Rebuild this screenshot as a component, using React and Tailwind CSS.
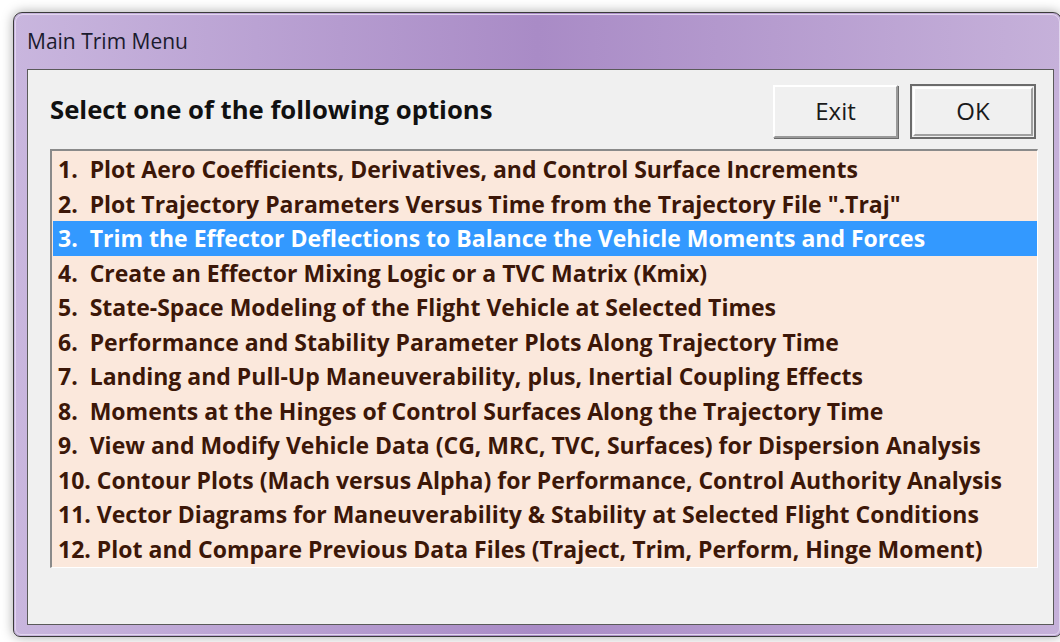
import React from "react";

const options = [
  "1.  Plot Aero Coefficients, Derivatives, and Control Surface Increments",
  "2.  Plot Trajectory Parameters Versus Time from the Trajectory File \".Traj\"",
  "3.  Trim the Effector Deflections to Balance the Vehicle Moments and Forces",
  "4.  Create an Effector Mixing Logic or a TVC Matrix (Kmix)",
  "5.  State-Space Modeling of the Flight Vehicle at Selected Times",
  "6.  Performance and Stability Parameter Plots Along Trajectory Time",
  "7.  Landing and Pull-Up Maneuverability, plus, Inertial Coupling Effects",
  "8.  Moments at the Hinges of Control Surfaces Along the Trajectory Time",
  "9.  View and Modify Vehicle Data (CG, MRC, TVC, Surfaces) for Dispersion Analysis",
  "10. Contour Plots (Mach versus Alpha) for Performance, Control Authority Analysis",
  "11. Vector Diagrams for Maneuverability & Stability at Selected Flight Conditions",
  "12. Plot and Compare Previous Data Files (Traject, Trim, Perform, Hinge Moment)",
];

const uiFont = { fontFamily: '"Open Sans", "Noto Sans", sans-serif' };

function Button({ label, isDefault }) {
  if (isDefault) {
    return (
      <div className="w-[126px] h-[55px] border-2 border-[#6b6b6b] bg-[#f0f0f0] p-[1px]">
        <div className="w-full h-full border-t-2 border-l-2 border-white border-b-2 border-r-2 border-b-[#a0a0a0] border-r-[#a0a0a0] flex items-center justify-center text-[24px] text-[#1a1a1a]" style={uiFont}>
          {label}
        </div>
      </div>
    );
  }
  return (
    <div className="w-[125px] h-[53px] mt-[1px] bg-[#f0f0f0] border-t-2 border-l-2 border-white border-b-2 border-r-2 border-b-[#9a9a9a] border-r-[#9a9a9a] shadow-[1px_1px_0_#6b6b6b] flex items-center justify-center text-[24px] text-[#1a1a1a]" style={uiFont}>
      {label}
    </div>
  );
}

export default function App() {
  return (
    <div className="w-[1060px] h-[642px] bg-white overflow-hidden pl-[13px] pt-[12px]">
      {/* dialog window */}
      <div className="w-[1049px] h-[625px] rounded-t-[9px] rounded-b-[7px] border border-[#3a3a3a] shadow-[0_0_12px_rgba(0,0,0,0.35)] bg-gradient-to-r from-[#c9b6de] via-[#a98bc6] to-[#c6b1da] p-[1px]">
        <div className="w-full h-full rounded-t-[8px] rounded-b-[6px] border border-[#e2d6ee] flex flex-col pl-[11px] pr-[5px] pb-[9px]">
          {/* title bar */}
          <div className="h-[54px] flex items-center text-[21px] text-[#1b1b2e]" style={uiFont}>
            Main Trim Menu
          </div>
          {/* client area */}
          <div className="flex-1 border border-[#5a5a5a] bg-[#f0f0f0] pl-[22px] pr-[13px] pt-[13px]">
            <div className="flex items-center h-[56px]">
              <div className="flex-1 text-[25.7px] font-bold text-[#111] pb-[2px]" style={uiFont}>
                Select one of the following options
              </div>
              <div className="flex gap-[12px] items-start mr-[4px]">
                <Button label="Exit" />
                <Button label="OK" isDefault />
              </div>
            </div>
            {/* option list */}
            <div className="mt-[10px] w-[988px] h-[419px] border-t-2 border-l-2 border-[#8a8a8a] border-b border-r border-b-[#ffffff] border-r-[#ffffff] bg-[#fbe8dc] pt-[1px] pl-[1px]">
              {options.map((text, i) => {
                const selected = i === 2;
                return (
                  <div
                    key={i}
                    className={
                      selected
                        ? "h-[34.5px] flex items-center pl-[5px] whitespace-pre bg-[#3399ff] text-white text-[23px] font-bold"
                        : "h-[34.5px] flex items-center pl-[5px] whitespace-pre text-[#3c1708] text-[23px] font-bold"
                    }
                    style={uiFont}
                  >
                    {text}
                  </div>
                );
              })}
            </div>
          </div>
        </div>
      </div>
    </div>
  );
}
